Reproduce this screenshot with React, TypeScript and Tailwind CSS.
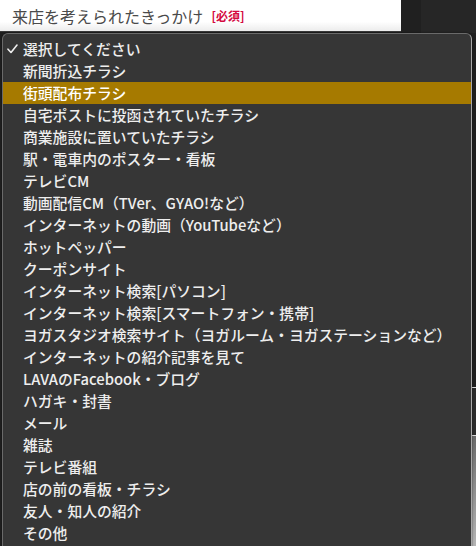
import React from "react";

const options = [
  "選択してください",
  "新聞折込チラシ",
  "街頭配布チラシ",
  "自宅ポストに投函されていたチラシ",
  "商業施設に置いていたチラシ",
  "駅・電車内のポスター・看板",
  "テレビCM",
  "動画配信CM（TVer、GYAO!など）",
  "インターネットの動画（YouTubeなど）",
  "ホットペッパー",
  "クーポンサイト",
  "インターネット検索[パソコン]",
  "インターネット検索[スマートフォン・携帯]",
  "ヨガスタジオ検索サイト（ヨガルーム・ヨガステーションなど）",
  "インターネットの紹介記事を見て",
  "LAVAのFacebook・ブログ",
  "ハガキ・封書",
  "メール",
  "雑誌",
  "テレビ番組",
  "店の前の看板・チラシ",
  "友人・知人の紹介",
  "その他",
];

const font = { fontFamily: '"Noto Sans CJK JP", "Noto Sans", sans-serif' };

export default function App() {
  const selected = 0;
  const hovered = 2;

  return (
    <div className="relative w-[476px] h-[546px] bg-[#1f1f1f] overflow-hidden" style={font}>
      {/* page behind the menu */}
      <div className="flex h-[33px]">
        <div className="w-[401px] h-[32px] bg-gradient-to-b from-white from-70% to-[#ececec] flex items-center pl-[12px] gap-[8px] border-b border-[#3a3a3a]">
          <span className="text-[16px] text-[#4a4a4a] leading-none">来店を考えられたきっかけ</span>
          <span className="text-[12px] font-bold text-[#d4093f] leading-none">[必須]</span>
        </div>
        <div className="w-[20px] bg-[#202020]" />
        <div className="flex-1 bg-[#262626]" />
      </div>

      {/* window edge at the far right */}
      <div className="absolute right-0 top-[387px] bottom-0 w-[4px] flex flex-col">
        <div className="h-[1px] bg-[#dcdcdc]" />
        <div className="h-[47px] bg-[#2a2a2a]" />
        <div className="h-[1px] bg-[#dcdcdc]" />
        <div className="flex-1 bg-gradient-to-b from-[#6a6a6a] to-[#b5b5b5]" />
      </div>

      {/* open select menu */}
      <div className="absolute left-[2px] top-[33px] w-[470px] h-[520px] bg-[#363636] border border-[#6a6a6a] border-r-[#a8a8a8] rounded-[6px] pt-[4px] shadow-[0_0_2px_rgba(0,0,0,0.6)]">
        <ul className="flex flex-col">
          {options.map((opt, i) => (
            <li
              key={opt}
              className={
                "relative h-[22px] flex items-center pl-[20px] text-[14.8px] font-medium leading-none text-[#eeeeee] " +
                (i === hovered ? "bg-[#a67a00] text-white" : "")
              }
            >
              {i === selected && (
                <svg
                  className="absolute left-[4px] top-[6px]"
                  width="11"
                  height="10"
                  viewBox="0 0 11 10"
                  fill="none"
                >
                  <path d="M1 5.2 L4 8.5 L10 1" stroke="#eeeeee" strokeWidth="1.6" strokeLinecap="round" strokeLinejoin="round" />
                </svg>
              )}
              {opt}
            </li>
          ))}
        </ul>
      </div>
    </div>
  );
}
